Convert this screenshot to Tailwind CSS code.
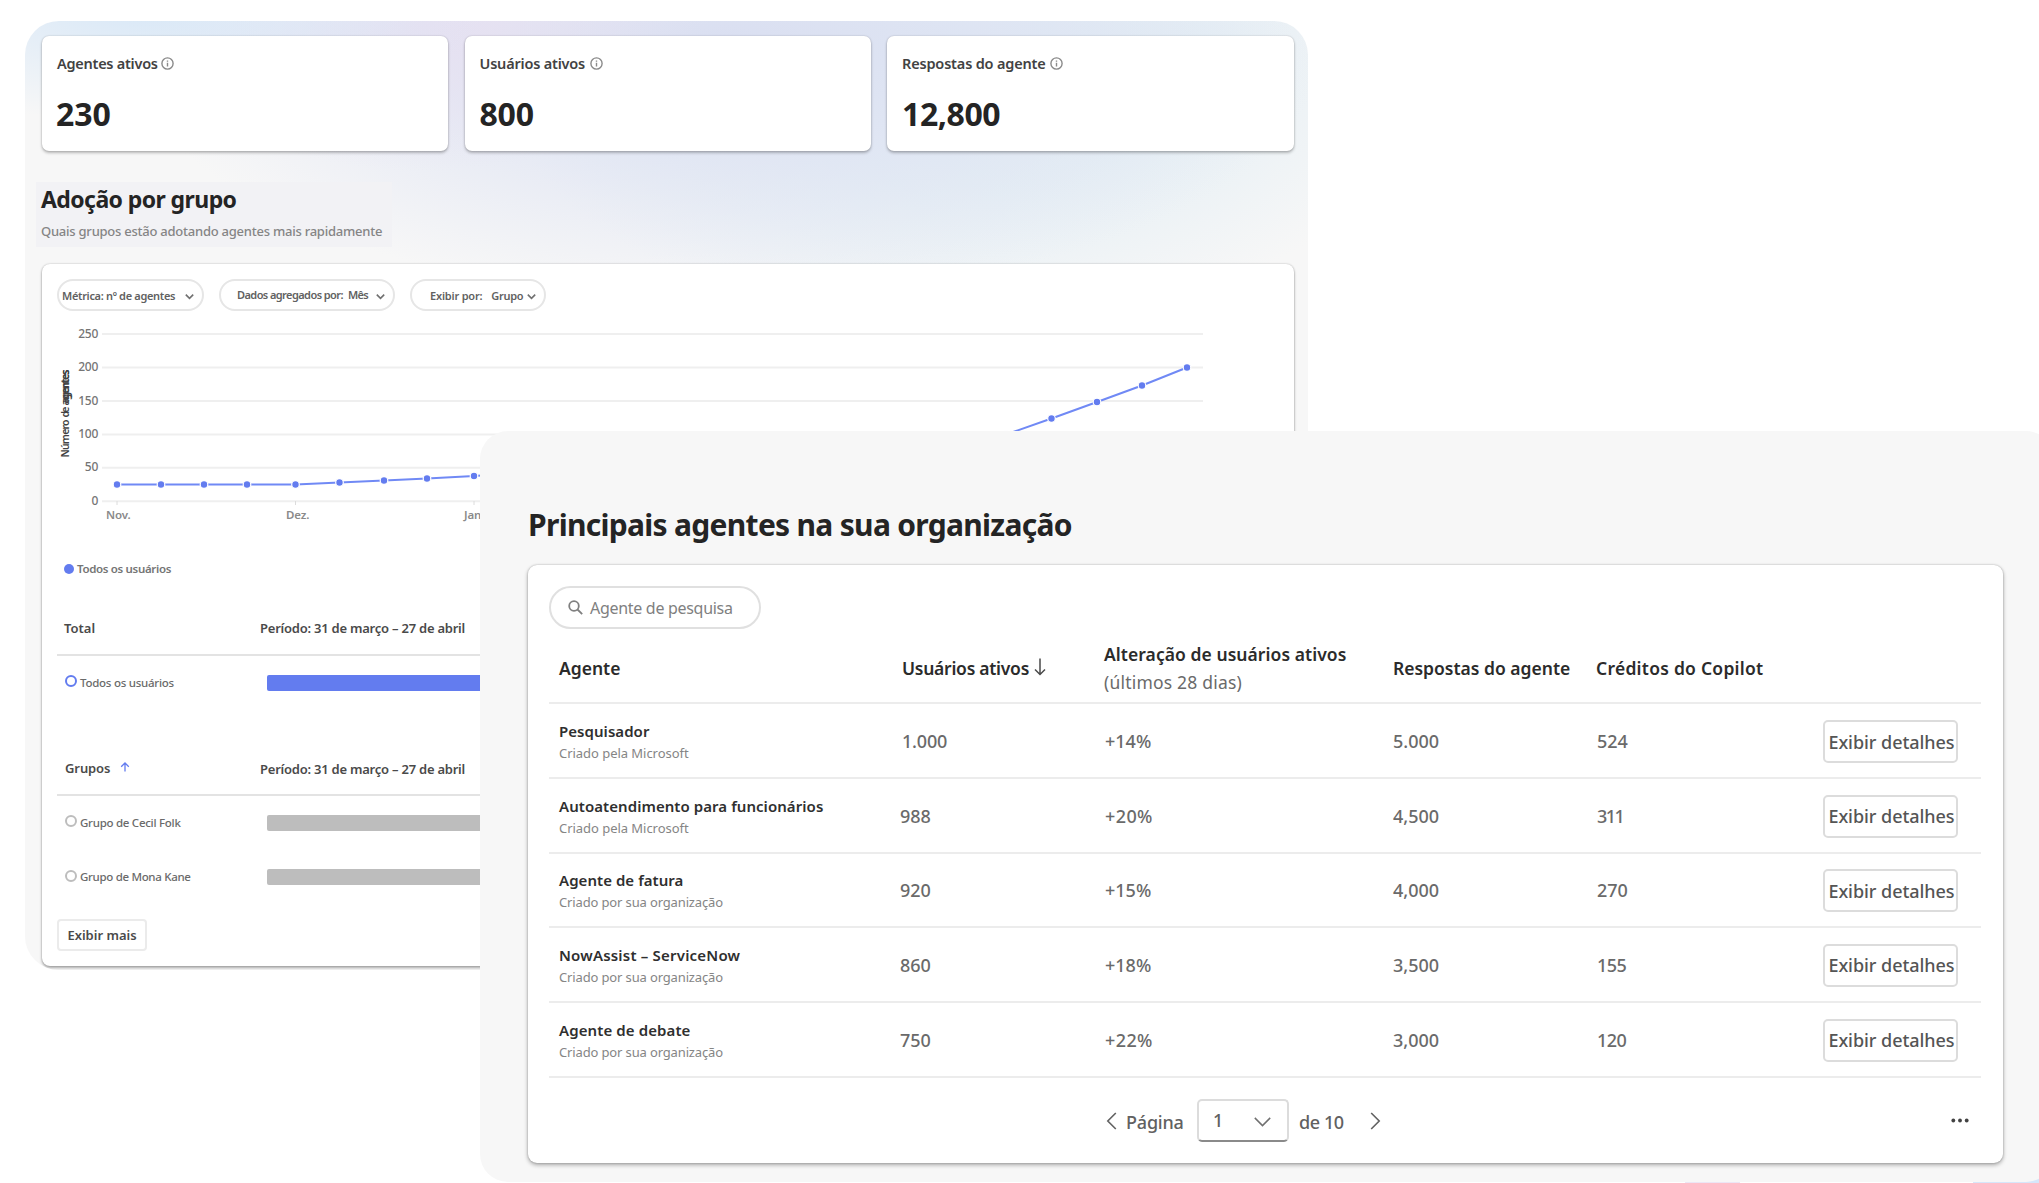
<!DOCTYPE html>
<html lang="pt-BR">
<head>
<meta charset="utf-8">
<title>Agentes</title>
<script src="https://cdn.jsdelivr.net/npm/@tailwindcss/browser@4"></script>
</head>
<body class="bg-white font-['Noto_Sans','Open_Sans',sans-serif] text-[#424242]">
<main class="relative flex h-[1183px] w-[2039px] overflow-hidden whitespace-nowrap bg-white">

  <!-- Adoption dashboard -->
  <section class="mt-[21px] ml-[25px] h-[949px] w-[1283px] shrink-0 overflow-hidden rounded-[34px] bg-[#f7f7f7] bg-[radial-gradient(ellipse_340px_110px_at_120px_-10px,#d9e8f7_0%,#d9e8f700_100%),radial-gradient(ellipse_280px_150px_at_400px_0px,#e6e0f1_0%,#e6e0f100_100%),radial-gradient(ellipse_600px_260px_at_700px_20px,#dadff1_0%,#dfe4f3cc_45%,#e6eaf500_100%),radial-gradient(ellipse_480px_290px_at_940px_20px,#dbe9f4_0%,#e1edf4cc_50%,#e9f0f500_100%)] px-[17px] pt-[15px]">
    <div class="grid grid-cols-[406px_406px_407px] gap-x-[16.5px]">
      <div class="h-[115px] rounded-[7px] bg-white pl-[15px] pt-[17px] shadow-[0_0_2px_rgba(0,0,0,0.2),0_2px_3px_rgba(0,0,0,0.25)]">
        <div class="flex h-[21px] items-center gap-[3px] text-[14.5px] leading-[21px] font-semibold tracking-[-0.26px]">Agentes ativos
          <svg class="size-[13px]" viewBox="0 0 13 13" fill="none" stroke="#8a8a8a" stroke-width="1.4"><circle cx="6.5" cy="6.5" r="5.6"/><path d="M6.5 5.8v3.6M6.5 3.5v1.2"/></svg></div>
        <div class="-ml-[1px] pt-[20px] text-[32px] leading-[40px] font-bold text-[#242424]">230</div>
      </div>
      <div class="h-[115px] rounded-[7px] bg-white pl-[15px] pt-[17px] shadow-[0_0_2px_rgba(0,0,0,0.2),0_2px_3px_rgba(0,0,0,0.25)]">
        <div class="flex h-[21px] items-center gap-[5px] text-[14.5px] leading-[21px] font-semibold tracking-[-0.2px]">Usuários ativos
          <svg class="size-[13px]" viewBox="0 0 13 13" fill="none" stroke="#8a8a8a" stroke-width="1.4"><circle cx="6.5" cy="6.5" r="5.6"/><path d="M6.5 5.8v3.6M6.5 3.5v1.2"/></svg></div>
        <div class="pt-[20px] text-[32px] leading-[40px] font-bold tracking-[-0.2px] text-[#242424]">800</div>
      </div>
      <div class="h-[115px] rounded-[7px] bg-white pl-[15px] pt-[17px] shadow-[0_0_2px_rgba(0,0,0,0.2),0_2px_3px_rgba(0,0,0,0.25)]">
        <div class="flex h-[21px] items-center gap-[4px] text-[14.5px] leading-[21px] font-semibold tracking-[-0.17px]">Respostas do agente
          <svg class="size-[13px]" viewBox="0 0 13 13" fill="none" stroke="#8a8a8a" stroke-width="1.4"><circle cx="6.5" cy="6.5" r="5.6"/><path d="M6.5 5.8v3.6M6.5 3.5v1.2"/></svg></div>
        <div class="pt-[20px] text-[32px] leading-[40px] font-bold tracking-[-0.4px] text-[#242424]">12,800</div>
      </div>
    </div>

    <div class="mt-[31px] -ml-[6px] h-[65px] w-[356px] bg-[#f2f2f5] pl-[5px]">
      <h2 class="pt-[1px] text-[23px] leading-[32px] font-bold tracking-[-0.58px] text-[#242424]">Adoção por grupo</h2>
      <p class="pt-[6px] text-[13px] leading-[20px] font-medium tracking-[-0.24px] text-[#858585]">Quais grupos estão adotando agentes mais rapidamente</p>
    </div>

    <div class="mt-[17px] flex h-[702px] w-[1252px] flex-col rounded-[8px] bg-white pl-[15px] pt-[15px] shadow-[0_0_2px_rgba(0,0,0,0.25),0_2px_3px_rgba(0,0,0,0.3)]">
      <div class="flex gap-[15px] text-[11px] font-semibold text-[#616161]">
        <div class="flex h-[32px] w-[147px] items-center gap-[10px] rounded-full border-2 border-[#e6e6e6] pt-[2px] pl-[3px] tracking-[-0.32px]">Métrica: nº de agentes
          <svg class="size-[9px]" viewBox="0 0 9 9" fill="none" stroke="#707070" stroke-width="1.6"><path d="M.8 2.6 4.5 6.3 8.2 2.6"/></svg></div>
        <div class="flex h-[32px] w-[176px] items-center rounded-full border-2 border-[#e6e6e6] pl-[16px]"><span class="tracking-[-0.58px]">Dados agregados por:</span><span class="ml-[5px] tracking-[-0.7px]">Mês</span>
          <svg class="mt-[2px] ml-[8px] size-[9px]" viewBox="0 0 9 9" fill="none" stroke="#707070" stroke-width="1.6"><path d="M.8 2.6 4.5 6.3 8.2 2.6"/></svg></div>
        <div class="flex h-[32px] w-[136px] items-center rounded-full border-2 border-[#e6e6e6] pt-[2px] pl-[18px]"><span class="tracking-[-0.2px]">Exibir por:</span><span class="ml-[9px] tracking-[-0.3px]">Grupo</span>
          <svg class="ml-[4px] size-[9px]" viewBox="0 0 9 9" fill="none" stroke="#707070" stroke-width="1.6"><path d="M.8 2.6 4.5 6.3 8.2 2.6"/></svg></div>
      </div>

      <svg class="h-[221px] w-[1200px] shrink-0" viewBox="57 311 1200 221" fill="none">
        <path d="M102 334H1203M102 367.500H1203M102 401H1203M102 434.500H1203M102 467.800H1203M102 501.300H1203" stroke="#efefef" stroke-width="2"/>
        <path d="M117 501v4M295.500 501v4M474 501v4" stroke="#dcdcdc" stroke-width="1"/>
        <g fill="#757575" font-size="12" font-weight="500" text-anchor="end" letter-spacing="-0.3">
          <text x="98" y="337.500">250</text><text x="98" y="371">200</text><text x="98" y="404.500">150</text><text x="98" y="438">100</text><text x="98" y="471.300">50</text><text x="98" y="505">0</text>
        </g>
        <g fill="#8a8a8a" font-size="11.500" font-weight="600" letter-spacing="-0.1">
          <text x="106" y="518.500">Nov.</text><text x="286" y="518.500">Dez.</text><text x="464" y="518.500">Jan.</text>
        </g>
        <g transform="translate(68.500 457.500) rotate(-90)" fill="#424242" font-size="10.500" font-weight="600">
          <text x="0" y="0" textLength="38">Número</text><text x="40" y="0" textLength="11">de</text><text x="52" y="0" textLength="36">agentes</text><text x="54" y="0" textLength="34">agentes</text>
        </g>
        <path d="M117 484.500H295.500L339.500 482.500 384 480.500 427 478.500 474 476 520 473L1006 434.500 1051.500 418.500 1097 402 1142 385.500 1187 367.500" stroke="#7089f5" stroke-width="2"/>
        <g fill="#637cef" stroke="#fff" stroke-width="1.200">
          <circle cx="117" cy="484.500" r="3.800"/><circle cx="161" cy="484.500" r="3.800"/><circle cx="204" cy="484.500" r="3.800"/><circle cx="247" cy="484.500" r="3.800"/><circle cx="295.500" cy="484.500" r="3.800"/><circle cx="339.500" cy="482.500" r="3.800"/><circle cx="384" cy="480.500" r="3.800"/><circle cx="427" cy="478.500" r="3.800"/><circle cx="474" cy="476" r="3.800"/><circle cx="1006" cy="434.500" r="3.800"/><circle cx="1051.500" cy="418.500" r="3.800"/><circle cx="1097" cy="402" r="3.800"/><circle cx="1142" cy="385.500" r="3.800"/><circle cx="1187" cy="367.500" r="3.800"/>
        </g>
      </svg>

      <div class="flex h-[75px] shrink-0 items-center gap-[3px] pb-[2px] pl-[7px] text-[11.5px] font-semibold tracking-[-0.33px] text-[#757575]"><span class="size-[10px] rounded-full bg-[#637cef]"></span>Todos os usuários</div>

      <div class="grid h-[49px] shrink-0 grid-cols-[203px_1fr] items-center border-b-2 border-[#e3e3e3] pb-[4px] text-[13px] font-semibold text-[#4a4a4a]"><span class="pl-[7px]">Total</span><span class="tracking-[-0.23px]">Período: 31 de março – 27 de abril</span></div>
      <div class="grid h-[53px] shrink-0 grid-cols-[210px_1fr] items-center">
        <div class="flex items-center gap-[3px] pl-[8px] text-[11.5px] font-medium tracking-[-0.25px] text-[#6a6a6a]"><span class="-mt-[3px] size-[12px] rounded-full border-2 border-[#637cef]"></span>Todos os usuários</div>
        <div class="h-[16px] rounded-[2px] bg-[#637cef]"></div>
      </div>

      <div class="mt-[35px] grid h-[52px] shrink-0 grid-cols-[203px_1fr] items-center border-b-2 border-[#e3e3e3] pt-[1px] text-[13px] font-semibold text-[#4a4a4a]">
        <span class="-mt-[2px] flex items-center gap-[10px] pl-[8px] tracking-[-0.1px]">Grupos
          <svg class="-mt-[4px] size-[10px]" viewBox="0 0 10 10" fill="none" stroke="#637cef" stroke-width="1.3"><path d="M5 9.500V1M1.200 4.800 5 1l3.800 3.800"/></svg></span>
        <span class="tracking-[-0.23px]">Período: 31 de março – 27 de abril</span></div>
      <div class="grid h-[53px] shrink-0 grid-cols-[210px_1fr] items-center">
        <div class="flex items-center gap-[3px] pl-[8px] text-[11.5px] font-medium tracking-[-0.27px] text-[#6a6a6a]"><span class="-mt-[3px] size-[12px] rounded-full border-2 border-[#bdbdbd]"></span>Grupo de Cecil Folk</div>
        <div class="h-[16px] rounded-[2px] bg-[#bdbdbd]"></div>
      </div>
      <div class="grid h-[56px] shrink-0 grid-cols-[210px_1fr] items-center">
        <div class="flex items-center gap-[3px] pl-[8px] text-[11.5px] font-medium tracking-[-0.32px] text-[#6a6a6a]"><span class="-mt-[3px] size-[12px] rounded-full border-2 border-[#bdbdbd]"></span>Grupo de Mona Kane</div>
        <div class="h-[16px] rounded-[2px] bg-[#bdbdbd]"></div>
      </div>
      <button class="mt-[14px] h-[32px] w-[90px] shrink-0 rounded-[4px] border-2 border-[#ebebeb] pt-[2px] text-[13px] font-semibold text-[#4a4a4a]">Exibir mais</button>
    </div>
  </section>

  <!-- Glow behind the front panel -->
  <div class="absolute right-0 bottom-0 h-[10px] w-[66px] bg-[#d6e6fa]"></div>
  <div class="absolute bottom-0 left-[1685px] h-[1px] w-[55px] bg-[#ece6f5]"></div>

  <!-- Top agents panel, overlapping the dashboard -->
  <section class="absolute top-[431px] left-[480px] h-[751px] w-[1574px] rounded-[28px] bg-[#f7f7f7] pt-[74px] pl-[48px]">
    <h1 class="h-[40px] text-[30px] leading-[40px] font-bold tracking-[-0.7px] text-[#242424]">Principais agentes na sua organização</h1>
    <div class="mt-[20px] h-[598px] w-[1475px] rounded-[9px] bg-white pt-[21px] pr-[22px] pl-[21px] shadow-[0_0_2px_rgba(0,0,0,0.25),0_2px_4px_rgba(0,0,0,0.32)]">
      <div class="flex h-[43px] w-[212px] items-center gap-[7px] rounded-full border-2 border-[#e0e0e0] pl-[17px] text-[16px] tracking-[-0.3px] text-[#808080]">
        <svg class="size-[15px]" viewBox="0 0 15 15" fill="none" stroke="#808080" stroke-width="1.800"><circle cx="6" cy="6" r="4.800"/><path d="m9.500 9.500 4.700 4.700"/></svg>Agente de pesquisa</div>

      <div class="grid h-[75px] grid-cols-[353px_202px_290px_203px_226px_1fr] items-center border-b-2 border-[#ececec] pt-[5px] text-[17.5px] font-semibold text-[#2b2b2b]">
        <span class="pt-[1px] pl-[10px]">Agente</span>
        <span class="flex items-center gap-[5px] pt-[1px] tracking-[-0.26px]">Usuários ativos
          <svg class="-mt-[4px] h-[18px] w-[12px]" viewBox="0 0 12 18" fill="none" stroke="#4a4a4a" stroke-width="1.500"><path d="M6 .5v16M1 11.500l5 5 5-5"/></svg></span>
        <span class="leading-[28px] tracking-[0.06px]">Alteração de usuários ativos<br><span class="font-normal tracking-[0.2px] text-[#6a6a6a]">(últimos 28 dias)</span></span>
        <span class="-ml-[1px] pt-[1px]">Respostas do agente</span>
        <span class="-ml-[1px] pt-[1px] tracking-[0.25px]">Créditos do Copilot</span>
      </div>

      <div class="grid h-[374px] grid-rows-5 text-[18px] font-medium text-[#6a6a6a]">
        <div class="grid grid-cols-[353px_202px_290px_203px_226px_135px] items-center border-b-2 border-[#ececec]">
          <div class="pt-[3px] pl-[10px] leading-[22px]"><div class="text-[15px] font-semibold tracking-[0.05px] text-[#2f2f2f]">Pesquisador</div><div class="text-[13px] font-normal tracking-[-0.04px] text-[#858585]">Criado pela Microsoft</div></div>
          <span class="pt-[2px] tracking-[-0.2px]">1.000</span><span class="pt-[2px] pl-[1px]">+14%</span><span class="-ml-[1px] pt-[2px]">5.000</span><span class="pt-[2px]">524</span>
          <button class="mt-[2px] h-[43px] rounded-[5px] border-2 border-[#dcdcdc] pt-[2px] pl-[2px] tracking-[-0.05px] text-[#555]">Exibir detalhes</button>
        </div>
        <div class="grid grid-cols-[353px_202px_290px_203px_226px_135px] items-center border-b-2 border-[#ececec]">
          <div class="pt-[3px] pl-[10px] leading-[22px]"><div class="text-[15px] font-semibold tracking-[0.06px] text-[#2f2f2f]">Autoatendimento para funcionários</div><div class="text-[13px] font-normal tracking-[-0.04px] text-[#858585]">Criado pela Microsoft</div></div>
          <span class="-ml-[2px] pt-[2px]">988</span><span class="pt-[2px] pl-[1px] tracking-[0.4px]">+20%</span><span class="-ml-[1px] pt-[2px]">4,500</span><span class="pt-[2px] tracking-[-1.6px]">311</span>
          <button class="mt-[2px] h-[43px] rounded-[5px] border-2 border-[#dcdcdc] pl-[2px] tracking-[-0.05px] text-[#555]">Exibir detalhes</button>
        </div>
        <div class="grid grid-cols-[353px_202px_290px_203px_226px_135px] items-center border-b-2 border-[#ececec]">
          <div class="pt-[3px] pl-[10px] leading-[22px]"><div class="text-[15px] font-semibold tracking-[0.05px] text-[#2f2f2f]">Agente de fatura</div><div class="text-[13px] font-normal tracking-[-0.14px] text-[#858585]">Criado por sua organização</div></div>
          <span class="-ml-[2px] pt-[2px]">920</span><span class="pt-[2px] pl-[1px]">+15%</span><span class="-ml-[1px] pt-[2px]">4,000</span><span class="pt-[2px]">270</span>
          <button class="mt-[2px] h-[43px] rounded-[5px] border-2 border-[#dcdcdc] pt-[2px] pl-[2px] tracking-[-0.05px] text-[#555]">Exibir detalhes</button>
        </div>
        <div class="grid grid-cols-[353px_202px_290px_203px_226px_135px] items-center border-b-2 border-[#ececec]">
          <div class="pt-[3px] pl-[10px] leading-[22px]"><div class="text-[15px] font-semibold tracking-[0.2px] text-[#2f2f2f]">NowAssist – ServiceNow</div><div class="text-[13px] font-normal tracking-[-0.14px] text-[#858585]">Criado por sua organização</div></div>
          <span class="-ml-[2px] pt-[2px]">860</span><span class="pt-[2px] pl-[1px]">+18%</span><span class="-ml-[1px] pt-[2px]">3,500</span><span class="pt-[2px] tracking-[-0.6px]">155</span>
          <button class="mt-[2px] h-[43px] rounded-[5px] border-2 border-[#dcdcdc] pl-[2px] tracking-[-0.05px] text-[#555]">Exibir detalhes</button>
        </div>
        <div class="grid grid-cols-[353px_202px_290px_203px_226px_135px] items-center border-b-2 border-[#ececec]">
          <div class="pt-[3px] pl-[10px] leading-[22px]"><div class="text-[15px] font-semibold tracking-[0.1px] text-[#2f2f2f]">Agente de debate</div><div class="text-[13px] font-normal tracking-[-0.14px] text-[#858585]">Criado por sua organização</div></div>
          <span class="-ml-[2px] pt-[2px]">750</span><span class="pt-[2px] pl-[1px] tracking-[0.4px]">+22%</span><span class="-ml-[1px] pt-[2px]">3,000</span><span class="pt-[2px] tracking-[-0.5px]">120</span>
          <button class="mt-[2px] h-[43px] rounded-[5px] border-2 border-[#dcdcdc] pl-[2px] tracking-[-0.05px] text-[#555]">Exibir detalhes</button>
        </div>
      </div>

      <div class="flex h-[85px] items-center pl-[557px] text-[18px] font-medium text-[#616161]">
        <svg class="h-[18px] w-[11px]" viewBox="0 0 11 18" fill="none" stroke="#616161" stroke-width="1.600"><path d="M9.800 1 1.800 9l8 8"/></svg>
        <span class="ml-[9px] w-[57px] pt-[4px] tracking-[-0.2px]">Página</span>
        <div class="ml-[14px] flex h-[43px] w-[92px] items-center rounded-[5px] border-2 border-[#dcdcdc] border-b-[#8a8a8a] pl-[14px]"><span class="w-[10px]">1</span>
          <svg class="mt-[2px] ml-[31px] h-[10px] w-[17px]" viewBox="0 0 17 10" fill="none" stroke="#707070" stroke-width="1.500"><path d="m.8.9 7.700 7.700L16.200.9"/></svg></div>
        <span class="ml-[10px] w-[46px] pt-[4px] tracking-[-0.4px]">de 10</span>
        <svg class="ml-[25px] h-[18px] w-[11px]" viewBox="0 0 11 18" fill="none" stroke="#616161" stroke-width="1.600"><path d="m1.200 1 8 8-8 8"/></svg>
        <svg class="mr-[12px] ml-auto h-[5px] w-[18px]" viewBox="0 0 18 5" fill="#424242"><circle cx="2.300" cy="2.500" r="1.900"/><circle cx="9" cy="2.500" r="1.900"/><circle cx="15.700" cy="2.500" r="1.900"/></svg>
      </div>
    </div>
  </section>
</main>
</body>
</html>
